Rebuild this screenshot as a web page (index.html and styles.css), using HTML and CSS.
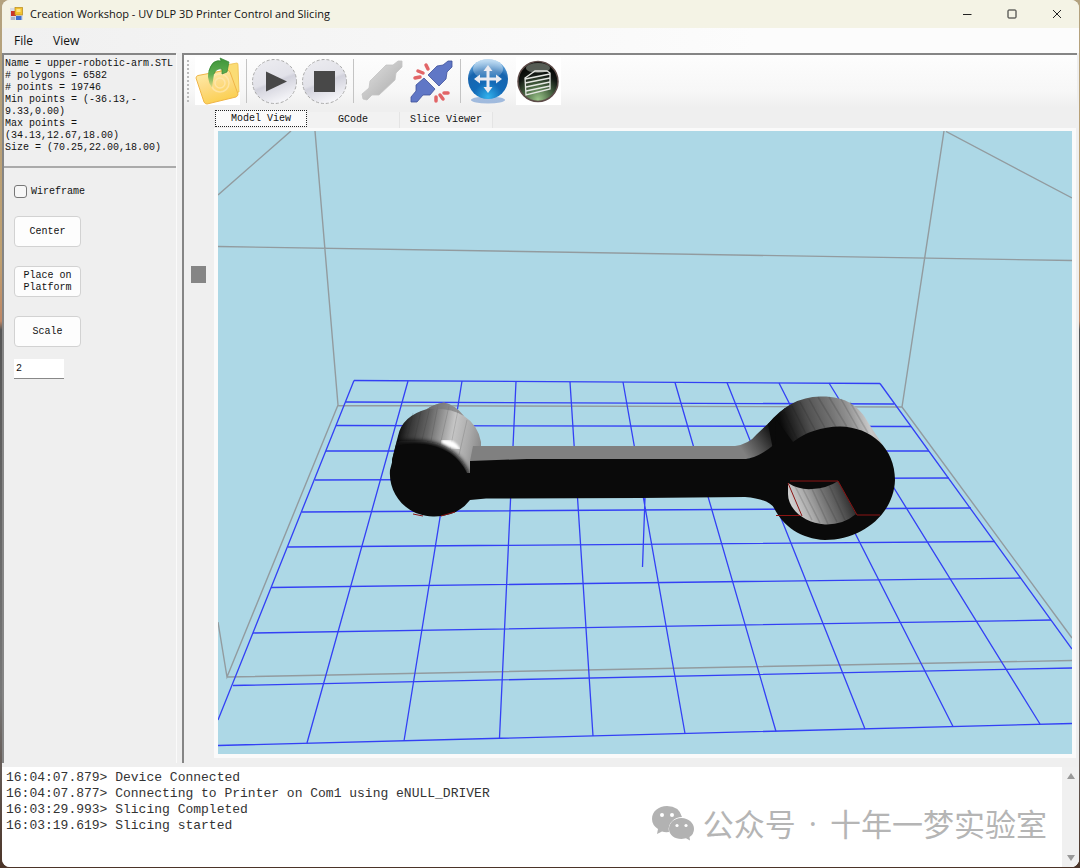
FILE: index.html
```html
<!DOCTYPE html>
<html lang="en">
<head>
<meta charset="utf-8">
<title>Creation Workshop</title>
<link rel="stylesheet" href="styles.css">
</head>
<body>
<div class="window">
  <header class="titlebar">
    <svg class="app-icon" viewBox="0 0 14 14" aria-hidden="true">
      <rect x="0" y="1" width="13" height="12" fill="#d9dde6"/>
      <rect x="1" y="4" width="5" height="5" fill="#c8352b"/>
      <rect x="5" y="0.500" width="7.500" height="7.500" fill="#f2c230" stroke="#b98a1a" stroke-width=".7"/>
      <rect x="6.500" y="2" width="4" height="3" fill="#ffe487"/>
      <rect x="6" y="9" width="5.500" height="4" fill="#3f6fd0"/>
      <rect x="1" y="10" width="4" height="3" fill="#aeb6c6"/>
    </svg>
    <h1 class="title">Creation Workshop - UV DLP 3D Printer Control and Slicing</h1>
    <div class="window-buttons">
      <button class="window-button" aria-label="Minimize"><svg viewBox="0 0 10 10"><path d="M1 5.500H9.500"/></svg></button>
      <button class="window-button" aria-label="Maximize"><svg viewBox="0 0 10 10"><rect x="1" y="1" width="8" height="8" rx=".8"/></svg></button>
      <button class="window-button" aria-label="Close"><svg viewBox="0 0 10 10"><path d="M1 1L9 9M9 1L1 9"/></svg></button>
    </div>
  </header>
  <nav class="menubar">
    <button class="menu">File</button>
    <button class="menu">View</button>
  </nav>

  <div class="workspace">
    <aside class="side">
      <p class="info">Name = upper-robotic-arm.STL<br># polygons = 6582<br># points = 19746<br>Min points = (-36.13,-<br>9.33,0.00)<br>Max points =<br>(34.13,12.67,18.00)<br>Size = (70.25,22.00,18.00)</p>
      <div class="controls">
        <label class="check"><input type="checkbox"> Wireframe</label>
        <button class="push">Center</button>
        <button class="push">Place on Platform</button>
        <button class="push">Scale</button>
        <input class="scale-value" type="text" value="2" aria-label="Scale factor">
      </div>
    </aside>

    <main class="main">
      <div class="toolbar">
        <span class="grip"></span>
        <button class="tool tool-white" aria-label="Open">
          <svg viewBox="0 0 45 48">
            <defs>
              <linearGradient id="fold" x1="0" y1="0" x2=".4" y2="1"><stop offset="0" stop-color="#fff0b0"/><stop offset=".5" stop-color="#fddc88"/><stop offset="1" stop-color="#fbd052"/></linearGradient>
              <linearGradient id="leaf" x1="0" y1="0" x2="0" y2="1"><stop offset="0" stop-color="#3d9438"/><stop offset=".55" stop-color="#5fae50"/><stop offset="1" stop-color="#e3da84"/></linearGradient>
            </defs>
            <path d="M10 18L26 14L28 9Q29 8 31 8L42 6Q43 6 43 8L44 35L16 42Z" fill="#fbdc74" stroke="#eebf4c" stroke-width=".8"/>
            <path d="M1 21Q1 19 3 18.500L32 13Q34 13 35 15L43 37Q43 39 41 40L12 47Q10 47 9 45Z" fill="url(#fold)" stroke="#efb548" stroke-width="1"/>
            <g fill="none" stroke="#ffe9b5" stroke-width="1.500" opacity=".7"><circle cx="25" cy="26" r="9"/><circle cx="25" cy="26" r="5"/></g>
            <path d="M17 31Q10 20 15 10Q19 2 26 4L25 1L34 5L32 15L27 17L27 12Q21 11 19 17Q18 23 17 31Z" fill="url(#leaf)"/>
            <path d="M14 14Q18 2 26 4L25 1L34 5L32 15L27 17L27 12Q21 11 19 17" fill="none" stroke="#368736" stroke-width=".7"/>
          </svg>
        </button>
        <span class="divider"></span>
        <button class="tool" aria-label="Play">
          <svg viewBox="0 0 45 48">
            <defs><linearGradient id="disc" x1=".2" y1="0" x2=".6" y2="1"><stop offset="0" stop-color="#ececf0"/><stop offset=".5" stop-color="#e2e2e9"/><stop offset=".56" stop-color="#d2d2dc"/><stop offset="1" stop-color="#f7f7fa"/></linearGradient></defs>
            <circle cx="22.500" cy="24.500" r="22" fill="url(#disc)" stroke="#aaa" stroke-dasharray="3 2"/>
            <path d="M14 14.500L35 24.500L14 34.500Z" fill="#484848"/>
          </svg>
        </button>
        <button class="tool" aria-label="Stop">
          <svg viewBox="0 0 45 48">
            <circle cx="22.500" cy="24.500" r="22" fill="url(#disc)" stroke="#aaa" stroke-dasharray="3 2"/>
            <rect x="12" y="14" width="21" height="21" fill="#484848"/>
          </svg>
        </button>
        <span class="divider"></span>
        <button class="tool" aria-label="Connect">
          <svg viewBox="0 0 45 48">
            <defs><linearGradient id="plug" x1="0" y1="0" x2="1" y2="1"><stop offset=".3" stop-color="#d2d2d2"/><stop offset="1" stop-color="#a8a8a8"/></linearGradient></defs>
            <path d="M4 42L3 37L10 31L11 24L27 8L34 8L39 4L43 4L43 10L37 16L36 23L20 38L13 38L8 43Z" fill="url(#plug)" stroke="#c4c4c4" stroke-width=".8"/>
          </svg>
        </button>
        <button class="tool" aria-label="Disconnect">
          <svg viewBox="0 0 45 48">
            <g fill="#6077c6" stroke="#40529b" stroke-width=".8">
              <path d="M19 18L28 9L34 8L39 4L43 4L43 10L38 15L37 22L30 29Z"/>
              <path d="M15 21L26 32L21 38L14 38L8 45L2 45L2 40L7 34L7 28Z"/>
            </g>
            <g stroke="#e26567" stroke-width="3.500" stroke-linecap="round"><path d="M17 8L19 12M9 14L14 16M6 21L11 20M35 36H39M31 38L34 42M27 40V44"/></g>
          </svg>
        </button>
        <span class="divider"></span>
        <button class="tool" aria-label="Move">
          <svg viewBox="0 0 45 48">
            <defs>
              <radialGradient id="ball" cx=".5" cy=".95" r=".9"><stop offset="0" stop-color="#32b2ec"/><stop offset=".4" stop-color="#136bb8"/><stop offset=".75" stop-color="#1764ae"/><stop offset="1" stop-color="#66a9df"/></radialGradient>
              <linearGradient id="gloss" x1="0" y1="0" x2="0" y2="1"><stop offset="0" stop-color="#fff" stop-opacity=".6"/><stop offset="1" stop-color="#fff" stop-opacity=".1"/></linearGradient>
            </defs>
            <ellipse cx="22" cy="43" rx="17" ry="3.500" fill="#7ea2d4" opacity=".7"/>
            <circle cx="22" cy="22" r="20" fill="url(#ball)"/>
            <ellipse cx="22" cy="12" rx="15" ry="10" fill="url(#gloss)"/>
            <path d="M22 8L26.500 14H23.500V20.500H30V17.500L36 22L30 26.500V23.500H23.500V30H26.500L22 36L17.500 30H20.500V23.500H14V26.500L8 22L14 17.500V20.500H20.500V14H17.500Z" fill="#ececf1"/>
          </svg>
        </button>
        <button class="tool tool-white" aria-label="Slice">
          <svg viewBox="0 0 45 48">
            <defs><radialGradient id="dark" cx=".5" cy=".95" r=".8"><stop offset="0" stop-color="#9bc58a"/><stop offset=".4" stop-color="#4f6e48"/><stop offset=".8" stop-color="#121713"/><stop offset="1" stop-color="#070907"/></radialGradient></defs>
            <circle cx="22" cy="24.500" r="20" fill="url(#dark)" stroke="#5d4b48" stroke-width="1.500"/>
            <ellipse cx="22" cy="11" rx="12" ry="5" fill="#98a194" opacity=".55"/>
            <g fill="none" stroke="#e6e8e4" stroke-width="1.300"><path d="M9 21L19 14H31L34 16V32L10 38Z"/><path d="M9 22L34 17M9 26L34 21M10 30L34 25M10 34L34 29"/></g>
          </svg>
        </button>
      </div>

      <div class="stage">
        <div class="rail"><span class="thumb"></span></div>
        <section class="tabs">
          <div class="tablist" role="tablist">
            <button class="tab tab-active" role="tab" aria-selected="true">Model View</button>
            <button class="tab" role="tab" aria-selected="false">GCode</button>
            <button class="tab" role="tab" aria-selected="false">Slice Viewer</button>
          </div>
          <div class="view">
            <svg class="scene" viewBox="218 131 854 623" preserveAspectRatio="xMidYMid slice" role="img" aria-label="3D model of a robotic arm">
              <defs>
                <linearGradient id="knob" gradientUnits="userSpaceOnUse" x1="399" y1="425" x2="481" y2="440">
                  <stop offset="0" stop-color="#0a0a0a"/><stop offset=".12" stop-color="#333"/><stop offset=".35" stop-color="#666"/><stop offset=".5" stop-color="#969696"/><stop offset=".65" stop-color="#c6c6c6"/><stop offset=".85" stop-color="#aaa"/><stop offset="1" stop-color="#8c8c8c"/>
                </linearGradient>
                <linearGradient id="rim" gradientUnits="userSpaceOnUse" x1="781" y1="425" x2="872" y2="400">
                  <stop offset="0" stop-color="#0a0a0a"/><stop offset=".14" stop-color="#292929"/><stop offset=".3" stop-color="#505050"/><stop offset=".55" stop-color="#747474"/><stop offset=".72" stop-color="#929292"/><stop offset=".9" stop-color="#c8c8c8"/><stop offset="1" stop-color="#b5b5b5"/>
                </linearGradient>
                <linearGradient id="neck" gradientUnits="userSpaceOnUse" x1="742" y1="450" x2="772" y2="430">
                  <stop offset="0" stop-color="#808080"/><stop offset=".5" stop-color="#4c4c4c"/><stop offset="1" stop-color="#111"/>
                </linearGradient>
                <linearGradient id="bore" gradientUnits="userSpaceOnUse" x1="792" y1="506" x2="849" y2="484">
                  <stop offset="0" stop-color="#d0d0d0"/><stop offset=".25" stop-color="#adadad"/><stop offset=".5" stop-color="#7a7a7a"/><stop offset=".75" stop-color="#525252"/><stop offset="1" stop-color="#222"/>
                </linearGradient>
                <filter id="soft"><feGaussianBlur stdDeviation="1"/></filter>
                <filter id="fade" x="-20%" y="-50%" width="140%" height="200%"><feGaussianBlur stdDeviation="2"/></filter>
                <clipPath id="knob-shape"><path d="M392 460L398 436Q402 416 427 409Q434 404 444 402.500Q454 404 464 416Q478 425 481 442L481 480H392Z"/></clipPath>
              </defs>
              <g class="cage">
                <path d="M218 195L291 131M315 131L338 405M218 246.500L1072 260.500M944 131L902 407M946 131.500L1072 198M338 405.500L902 407L1072 638M338 405L227 677L218 622M227 677L1072 660.500"/>
              </g>
              <g class="grid">
                <path d="M354 380.500L880 383.500M345.500 402L894 404M336 425.500L911 426.500M326 451L929 451M315 480L949 478M302 512L971 508M288 547L995 541.500M271 587.500L1021 578M253 633L1051 620M233 685.500L1072 668M218 745.500L1072 723.500"/>
                <path d="M354 380.500L218 720M408 381L307 743M462 381L404 741M516 381.500L499.500 738M570 382L593 736M623 382L685 733.500M675 382.500L776 731.500M727 382.500L865 729M779 383L953 726.500M829 383L1040 724M880 383.500L1072 649M645 498L642.500 567"/>
              </g>
              <path d="M392 460L398 436Q402 416 427 409Q434 404 444 402.500Q454 404 464 416Q478 425 481 442L481 460L466 480Z" fill="url(#knob)"/>
              <g stroke="#222" stroke-opacity=".15"><path d="M413 413L406 442M421 411L414 441M430 407L422 440M438 405L431 441M449 406L441 441M458 410L450 450M467 420L459 455"/></g>
              <path d="M427 409Q434 404 444 402.500Q454 404 464 416Q450 407 427 409Z" fill="#777" opacity=".65"/>
              <g clip-path="url(#knob-shape)"><path d="M390 445Q403 441 420 442Q455 444 468 474H390Z" fill="#0a0a0a" stroke="#0a0a0a" stroke-width="3" filter="url(#fade)"/></g>
              <path d="M390 470L396 447Q403 443 422 444Q454 447 467 473H645L640 498L486 498.500L470 500Q457 517 433 516.500C407 516 388 495 390 470Z" fill="#0a0a0a"/>
              <path d="M443 441Q453 440 458 448Q450 446 443 442Z" fill="#fff" stroke="#fff" stroke-width="3" filter="url(#soft)"/>
              <path d="M473 446H738L752 447L748 461H470Z" fill="#808080"/>
              <path d="M735 446Q749 444 757 434L785 408L796 440L770 458H742Z" fill="url(#neck)"/>
              <path d="M768 424Q790 397 820 396.500C845 396 859 405 869 424L882 444L850 470L775 460Z" fill="url(#rim)"/>
              <g stroke="#111" stroke-opacity=".14" stroke-width="1.500"><path d="M784 412L797 439M792 406L806 434M800 402L815 430M809 399L825 428M818 397L836 427M829 397L847 427M841 399L858 429M850 402L868 433"/></g>
              <path d="M775 418L793 442Q812 427 840 426.500C871 427 895 448 895 480C894 514 862 540 825 540C801 539 783 526 774 508Q769 499 745 497L640 498H470V461L527 459H746Q760 457 776 443Z" fill="#0a0a0a"/>
              <path d="M788 483Q799 490 812 489Q828 488 838 481L856 514Q843 525 825 524.500C804 523 788 509 788 494Z" fill="url(#bore)"/>
              <g stroke="#111" stroke-opacity=".15" stroke-width="1.500"><path d="M795 486L812 520M803 489L820 523M812 489L828 524M820 488L837 522M829 485L845 520"/></g>
              <g class="edges"><path d="M790 481H838L857 515H880M788 483L802 516M776 515.500H800"/><path d="M413 514L423 516M441 516L455 512"/></g>
            </svg>
          </div>
        </section>
      </div>
    </main>
  </div>

  <footer class="log">
    <div class="log-text" role="log">16:04:07.879&gt; Device Connected
16:04:07.877&gt; Connecting to Printer on Com1 using eNULL_DRIVER
16:03:29.993&gt; Slicing Completed
16:03:19.619&gt; Slicing started</div>
    <div class="watermark">
      <svg class="chat-logo" viewBox="0 0 42 35" aria-hidden="true">
        <path d="M15 0C6.500 0 0 5.500 0 13Q0 19 6 23L5 28L10 25.500Q13 26.500 17 26C15 17 23 11 30 11Q27 0 15 0Z"/>
        <path d="M29.500 12C22 12 17 17 17 23C17 29 22.500 33 29.500 33L34 32.300L38 34.500L37.500 31Q42 28 42 23C42 17 36.500 12 29.500 12Z"/>
        <g fill="#fff"><circle cx="10" cy="9" r="2"/><circle cx="20" cy="9" r="2"/><circle cx="25" cy="19.500" r="1.600"/><circle cx="34" cy="19.500" r="1.600"/></g>
      </svg>
      <span>公众号</span><span class="dot">·</span><span>十年一梦实验室</span>
    </div>
    <div class="scrollbar">
      <button class="arrow" aria-label="Scroll up"><svg viewBox="0 0 8 6"><path d="M4 0L8 6H0Z"/></svg></button>
      <button class="arrow" aria-label="Scroll down"><svg viewBox="0 0 8 6"><path d="M4 6L8 0H0Z"/></svg></button>
    </div>
  </footer>
</div>
</body>
</html>
```
FILE: styles.css
```css
* {
  box-sizing: border-box;
}

body {
  margin: 0;
  height: 100vh;
  padding: 0 1px 1px 2px;
  background: linear-gradient(#b3a27f 0, #c0a070 30%, #c08866 37%, #555 38%, #777 80%, #4b3428);
}

button,
input {
  margin: 0;
  font: inherit;
  color: inherit;
}

button {
  padding: 0;
  border: 0;
  background: none;
}

svg {
  display: block;
}

.window {
  display: flex;
  flex-direction: column;
  height: 100%;
  overflow: hidden;
  border-radius: 8px;
  background: #efefef;
  color: #111;
  font: 10px/12px "Liberation Mono", monospace;
}

.titlebar {
  display: flex;
  flex: none;
  align-items: center;
  height: 28px;
  padding-left: 8px;
  background: #f4f3e5;
}

.app-icon {
  width: 14px;
  height: 14px;
}

.title {
  flex: 1;
  margin: 0 0 0 6px;
  font: 400 11px/16px "Open Sans", sans-serif;
}

.window-buttons {
  display: flex;
}

.window-button {
  display: grid;
  place-items: center;
  width: 45px;
  height: 28px;
}

.window-button svg {
  width: 10px;
  height: 10px;
  fill: none;
  stroke: #222;
}

.menubar {
  display: flex;
  flex: none;
  gap: 20px;
  align-items: center;
  height: 25px;
  padding-left: 12px;
  background: linear-gradient(90deg, #f0f0f0, #fcfcfc 70%);
  font: 12px/16px "Open Sans", sans-serif;
}

.workspace {
  display: flex;
  flex: 1;
  gap: 6px;
  min-height: 0;
  padding-right: 2px;
}

.side {
  flex: none;
  width: 174px;
  border-top: 2px solid #858585;
  border-left: 2px solid #858585;
  box-shadow: 1px 1px #fafafa;
}

.info {
  height: 113px;
  margin: 0;
  padding: 3px 0 0 1px;
  border-bottom: 2px solid #aaa;
  white-space: nowrap;
}

.controls {
  display: flex;
  flex-direction: column;
  gap: 19px;
  align-items: flex-start;
  padding: 18px 10px;
}

.check {
  display: flex;
  gap: 4px;
  align-items: center;
  height: 11px;
}

.check input {
  appearance: none;
  width: 13px;
  height: 13px;
  border: 1px solid #777;
  border-radius: 3px;
  background: #f7f7f7;
}

.push {
  width: 67px;
  height: 31px;
  padding: 0 4px;
  border: 1px solid #d2d2d2;
  border-radius: 4px;
  background: #fdfdfd;
}

.scale-value {
  width: 50px;
  height: 20px;
  margin-top: -7px;
  padding: 0 2px;
  border: 0;
  border-bottom: 1px solid #888;
  background: #fff;
}

.main {
  display: flex;
  flex: 1;
  flex-direction: column;
  min-width: 0;
  border-top: 2px solid #858585;
  border-left: 2px solid #858585;
  box-shadow: 0 1px #fafafa;
}

.toolbar {
  display: flex;
  flex: none;
  gap: 5px;
  align-items: center;
  height: 52px;
  padding-left: 3px;
  background: linear-gradient(#fdfdfd, #f7f7f7 70%, #efefef);
}

.grip {
  width: 3px;
  height: 42px;
  border-left: 2px dotted #bbb;
}

.divider {
  width: 1px;
  height: 44px;
  margin-left: 1px;
  background: #c4c4c4;
}

.tool {
  width: 45px;
  height: 48px;
}

.tool-white {
  background: #fff;
}

.tool svg {
  width: 45px;
  height: 48px;
}

.stage {
  display: flex;
  flex: 1;
  min-height: 0;
  padding: 3px 1px 5px 0;
}

.rail {
  flex: none;
  width: 30px;
  padding: 156px 0 0 7px;
}

.thumb {
  display: block;
  width: 15px;
  height: 17px;
  background: #858585;
}

.tabs {
  display: flex;
  flex: 1;
  flex-direction: column;
  min-width: 0;
}

.tablist {
  display: flex;
  flex: none;
  align-items: flex-end;
  height: 18px;
  padding-left: 1px;
}

.tab {
  width: 93px;
  height: 16px;
  border-right: 1px solid #e4e4e4;
  background: #f2f2f2;
}

.tab-active {
  width: 92px;
  height: 17px;
  margin-bottom: 1px;
  border: 1px dotted #222;
  background: #fafafa;
}

.view {
  flex: 1;
  min-height: 0;
  border: 4px solid #fafafa;
  border-top-width: 3px;
  background: #add8e6;
}

.scene {
  width: 100%;
  height: 100%;
}

.cage {
  fill: none;
  stroke: #929b9f;
  stroke-width: 1.4px;
}

.grid {
  fill: none;
  stroke: #3340f5;
  stroke-width: 1.3px;
}

.edges {
  fill: none;
  stroke: #8b1414;
}

.log {
  position: relative;
  display: flex;
  flex: none;
  height: 104px;
  border-top: 4px solid #efefef;
  background: #fff;
}

.log-text {
  flex: 1;
  padding: 3px 4px;
  color: #333;
  font-size: 13px;
  line-height: 16px;
  white-space: pre;
}

.scrollbar {
  display: flex;
  flex-direction: column;
  justify-content: space-between;
  width: 17px;
  background: #f0f0f0;
}

.arrow {
  display: grid;
  place-items: center;
  height: 18px;
}

.arrow svg {
  width: 8px;
  height: 6px;
  fill: #999;
}

.watermark {
  position: absolute;
  right: 32px;
  bottom: 22px;
  display: flex;
  gap: 9px;
  align-items: center;
  color: #b5b5b5;
  font: 400 31px/44px "Noto Sans CJK SC", sans-serif;
}

.dot {
  padding: 0 4px;
  font-family: "Open Sans", sans-serif;
}

.chat-logo {
  width: 42px;
  height: 35px;
  fill: #b2b2b2;
}
```
